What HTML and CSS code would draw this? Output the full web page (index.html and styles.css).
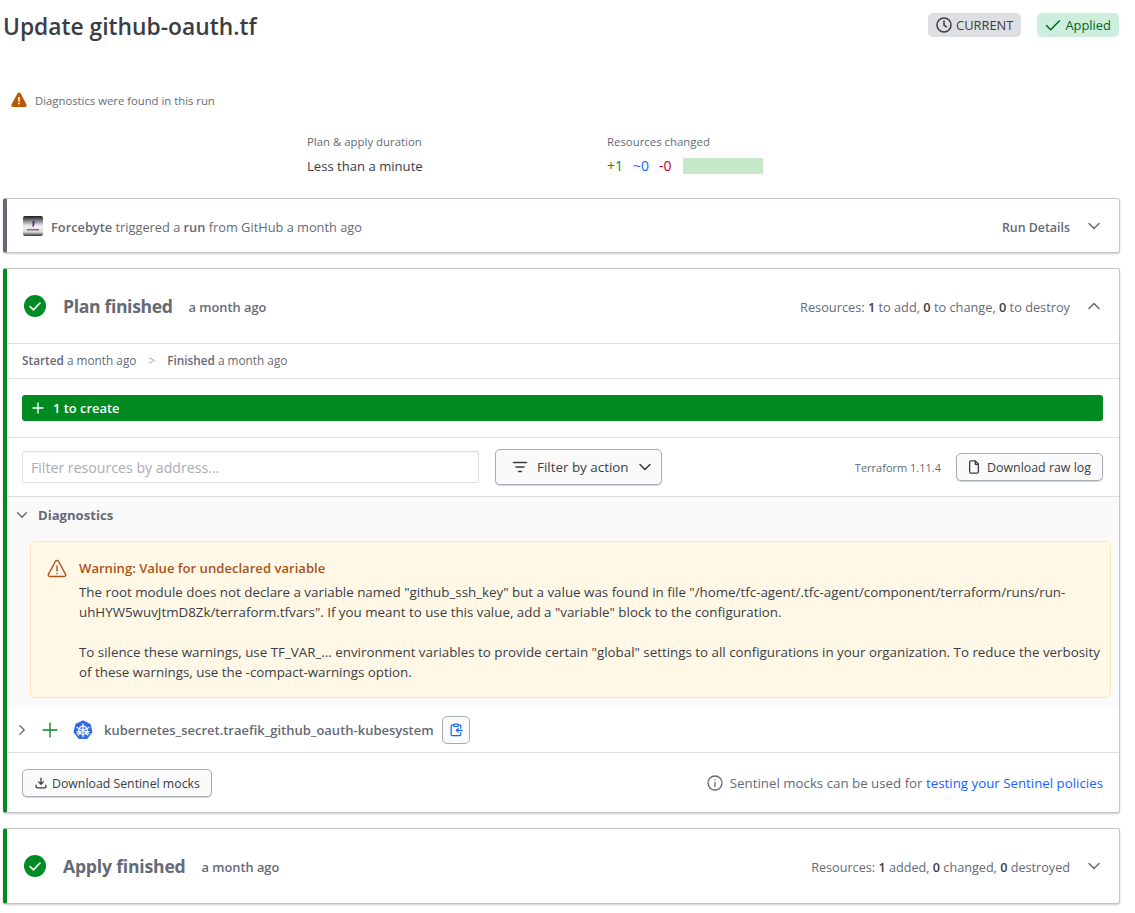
FILE: index.html
```html
<!DOCTYPE html>
<html lang="en">
<head>
<meta charset="utf-8">
<title>Update github-oauth.tf</title>
<link rel="stylesheet" href="styles.css">
</head>
<body>
<header class="top">
  <h1>Update github-oauth.tf</h1>
  <div class="badges">
    <span class="badge badge-grey"><svg class="i16" viewBox="0 0 16 16" fill="none" stroke="currentColor" stroke-width="1.5" stroke-linecap="round" stroke-linejoin="round"><circle cx="8" cy="8" r="7"/><path d="M8 4v4.2l2.4 1.6"/></svg>CURRENT</span>
    <span class="badge badge-green"><svg class="i16" viewBox="0 0 16 16" fill="none" stroke="currentColor" stroke-width="1.5" stroke-linecap="round" stroke-linejoin="round"><path d="M1.5 8.5l4.2 4.2L14.5 3.8"/></svg>Applied</span>
  </div>
</header>
<div class="notice">
  <svg class="i16 warn" viewBox="0 0 16 16"><path fill="#bb5a00" fill-rule="evenodd" d="M6.5 1.3a1.7 1.7 0 0 1 3 0l6 11.2A1.7 1.7 0 0 1 14 15H2a1.7 1.7 0 0 1-1.5-2.5zM7.2 5v4.6h1.6V5zM8 10.6a1 1 0 1 0 0 2 1 1 0 0 0 0-2z"/></svg>
  <span>Diagnostics were found in this run</span>
</div>
<section class="stats">
  <div class="stat">
    <div class="stat-label">Plan &amp; apply duration</div>
    <div class="stat-value">Less than a minute</div>
  </div>
  <div class="stat">
    <div class="stat-label">Resources changed</div>
    <div class="stat-value changes"><span class="c-add">+1</span><span class="c-chg">~0</span><span class="c-del">-0</span><span class="bar"></span></div>
  </div>
</section>

<section class="card card-grey run-card">
  <div class="run-left">
    <svg class="avatar" viewBox="0 0 20 20"><defs><linearGradient id="av" x1="0" y1="0" x2="0" y2="1"><stop offset="0" stop-color="#1c1c1c"/><stop offset=".5" stop-color="#f2f2f2"/><stop offset=".8" stop-color="#d8d8d8"/><stop offset="1" stop-color="#333"/></linearGradient></defs><rect width="20" height="20" rx="2" fill="url(#av)"/><path d="M9.5 5h2v3l-1 3h-1z" fill="#5a2a80"/><rect x="4" y="13" width="12" height="1.5" fill="#777"/></svg>
    <span class="low"><b>Forcebyte</b> triggered a <b>run</b> from GitHub a month ago</span>
  </div>
  <div class="run-right"><b class="details">Run Details</b><svg class="chev" viewBox="0 0 16 16" fill="none" stroke="currentColor" stroke-width="1.5" stroke-linecap="round" stroke-linejoin="round"><path d="M3 5.500l5 5 5-5"/></svg></div>
</section>

<section class="card card-green plan-card">
  <div class="phase-head">
    <div class="phase-left">
      <svg class="ok" viewBox="0 0 22 22"><circle cx="11" cy="11" r="11" fill="#008a22"/><path d="M6 11.5l3.4 3.4L16 8" fill="none" stroke="#fff" stroke-width="1.6" stroke-linecap="round" stroke-linejoin="round"/></svg>
      <h2 class="h2-plan">Plan finished</h2><span class="ago low">a month ago</span>
    </div>
    <div class="phase-right"><span class="low">Resources: <b>1</b> to add, <b>0</b> to change, <b>0</b> to destroy</span><svg class="chev" viewBox="0 0 16 16" fill="none" stroke="currentColor" stroke-width="1.5" stroke-linecap="round" stroke-linejoin="round"><path d="M3 10.5l5-5 5 5"/></svg></div>
  </div>
  <div class="times"><span><b>Started</b> a month ago</span><span class="sep">&gt;</span><span><b>Finished</b> a month ago</span></div>
  <div class="bar-row"><div class="create-bar"><svg class="i12" viewBox="0 0 12 12" fill="none" stroke="#fff" stroke-width="1.4" stroke-linecap="round"><path d="M6 1v10M1 6h10"/></svg><span>1 to create</span></div></div>
  <div class="filter-row">
    <div class="filter-left">
      <div class="input">Filter resources by address...</div>
      <div class="btn btn-filter"><svg class="i16" viewBox="0 0 16 16" fill="none" stroke="currentColor" stroke-width="1.5" stroke-linecap="round"><path d="M1.5 3.5h13M4 8h8M6.5 12.5h3"/></svg><span class="filter-text">Filter by action</span><svg class="i16" viewBox="0 0 16 16" fill="none" stroke="currentColor" stroke-width="1.5" stroke-linecap="round" stroke-linejoin="round"><path d="M3 5.5l5 5 5-5"/></svg></div>
    </div>
    <div class="filter-right">
      <span class="tf-ver">Terraform 1.11.4</span>
      <div class="btn btn-log"><svg class="i14" viewBox="0 0 16 16" fill="none" stroke="currentColor" stroke-width="1.5" stroke-linejoin="round"><path d="M3 2.5A1.5 1.5 0 0 1 4.500 1H9.500L13 4.500V13.500A1.500 1.500 0 0 1 11.500 15H4.500A1.500 1.500 0 0 1 3 13.500z"/><path d="M9.500 1v4H13"/></svg><span class="low-1">Download raw log</span></div>
    </div>
  </div>
  <div class="diag">
    <div class="diag-title"><svg class="i14 diag-chev" viewBox="0 0 16 16" fill="none" stroke="currentColor" stroke-width="1.6" stroke-linecap="round" stroke-linejoin="round"><path d="M3 5.500l5 5 5-5"/></svg><b>Diagnostics</b></div>
    <div class="warning">
      <svg class="warn-ico" viewBox="0 0 20 20" fill="none" stroke="#a9541b" stroke-width="1.4" stroke-linecap="round" stroke-linejoin="round"><path d="M8.400 2.500a1.800 1.800 0 0 1 3.200 0l7 12.800a1.500 1.500 0 0 1-1.300 2.200H2.700a1.500 1.500 0 0 1-1.300-2.200z"/><path d="M10 7v5M10 14.500v.3"/></svg>
      <div class="warn-body">
        <div class="warn-title">Warning: Value for undeclared variable</div>
        <p>The root module does not declare a variable named "github_ssh_key" but a value was found in file "/home/tfc-agent/.tfc-agent/component/terraform/runs/run-uhHYW5wuvJtmD8Zk/terraform.tfvars". If you meant to use this value, add a "variable" block to the configuration.</p>
        <p>To silence these warnings, use TF_VAR_... environment variables to provide certain "global" settings to all configurations in your organization. To reduce the verbosity of these warnings, use the -compact-warnings option.</p>
      </div>
    </div>
  </div>
  <div class="res-row">
    <svg class="i14 res-chev" viewBox="0 0 16 16" fill="none" stroke="currentColor" stroke-width="1.6" stroke-linecap="round" stroke-linejoin="round"><path d="M5.500 3l5 5-5 5"/></svg>
    <svg class="res-plus" viewBox="0 0 16 16" fill="none" stroke="#008a22" stroke-width="1.300" stroke-linecap="round"><path d="M8 1v14M1 8h14"/></svg>
    <svg class="k8s" viewBox="0 0 20 20"><path d="M10 .3l7.600 3.700 1.900 8.200-5.300 6.700H5.800L.5 12.200 2.400 4z" fill="#326ce5"/><g fill="none" stroke="#fff" stroke-width="1.200" stroke-linecap="round"><circle cx="10" cy="10.300" r="4.200"/><path d="M10 3.800v13M4 7.500l12 6M16 7.500l-12 6M5.200 15l2.500-2.400M14.800 15l-2.500-2.400M4 11.500h1.500M14.500 11.500H16"/></g></svg>
    <span class="res-name">kubernetes_secret.traefik_github_oauth-kubesystem</span>
    <span class="copy"><svg class="i14" viewBox="0 0 16 16" fill="none" stroke="#1563ff" stroke-width="1.400" stroke-linejoin="round" stroke-linecap="round"><path d="M5 2.500H3.500A1 1 0 0 0 2.500 3.500v10a1 1 0 0 0 1 1h9a1 1 0 0 0 1-1V11M13.500 6V3.500a1 1 0 0 0-1-1H11"/><rect x="5.500" y="1.200" width="5" height="2.800" rx=".6"/><path d="M15 8.500H8.500M10.500 6.500l-2 2 2 2"/></svg></span>
  </div>
  <div class="foot">
    <div class="btn btn-mock"><svg class="i12" viewBox="0 0 16 16" fill="none" stroke="currentColor" stroke-width="1.700" stroke-linecap="round" stroke-linejoin="round"><path d="M8 1.500v8M4.800 6.500L8 9.700l3.200-3.200M1.500 11v2a1.500 1.500 0 0 0 1.500 1.500h10a1.500 1.500 0 0 0 1.500-1.500v-2"/></svg><span class="low">Download Sentinel mocks</span></div>
    <div class="foot-note"><svg class="i16" viewBox="0 0 16 16" fill="none" stroke="currentColor" stroke-width="1.300" stroke-linecap="round"><circle cx="8" cy="8" r="7"/><path d="M8 7.500v4M8 4.800v.2"/></svg><span>Sentinel mocks can be used for <a href="#">testing your Sentinel policies</a></span></div>
  </div>
</section>

<section class="card card-green apply-card">
  <div class="phase-left">
    <svg class="ok" viewBox="0 0 22 22"><circle cx="11" cy="11" r="11" fill="#008a22"/><path d="M6 11.500l3.400 3.400L16 8" fill="none" stroke="#fff" stroke-width="1.600" stroke-linecap="round" stroke-linejoin="round"/></svg>
    <h2>Apply finished</h2><span class="ago low">a month ago</span>
  </div>
  <div class="phase-right phase-right-apply"><span class="low">Resources: <b>1</b> added, <b>0</b> changed, <b>0</b> destroyed</span><svg class="chev" viewBox="0 0 16 16" fill="none" stroke="currentColor" stroke-width="1.500" stroke-linecap="round" stroke-linejoin="round"><path d="M3 5.500l5 5 5-5"/></svg></div>
</section>
</body>
</html>
```
FILE: styles.css
```css
* { box-sizing: border-box; }
html, body { margin: 0; padding: 0; }
body {
  background: #fff;
  color: #3b3d45;
  font-family: "Open Sans", "Noto Sans", sans-serif;
  font-size: 12.8px;
  line-height: 20px;
  padding: 0 15px 0 3px;
  height: 913px;
  overflow: hidden;
}
b { font-weight: 600; }
svg { display: block; flex: none; }
.i12 { width: 12px; height: 12px; }
.i14 { width: 14px; height: 14px; }
.i16 { width: 16px; height: 16px; }
.low { padding-top: 2px; }
.low-1 { padding-top: 1px; }

.top { display: flex; justify-content: space-between; height: 54px; padding-top: 13px; }
h1 { margin: 0; font-size: 22.8px; line-height: 28px; font-weight: 600; color: #3b3d45; }
.badges { display: flex; gap: 16px; align-items: flex-start; margin-right: 1px; }
.badge { display: flex; align-items: center; gap: 4px; height: 24px; border-radius: 5px; padding: 0 8px; font-size: 12.9px; }
.badge-grey { background: #dedfe3; color: #3b3d45; }
.badge-green { background: #cdeedd; color: #00661d; }

.notice { display: flex; align-items: center; gap: 8px; margin-top: 36px; padding-left: 8px; height: 20px; font-size: 11.3px; color: #656a76; }
.notice span { padding-top: 1px; }
.stats { display: grid; grid-template-columns: 300px 300px; padding-left: 304px; margin-top: 22px; height: 66px; }
.stat-label { font-size: 11.4px; color: #656a76; line-height: 20px; }
.stat-value { font-size: 13.1px; color: #3b3d45; margin-top: 4px; line-height: 20px; }
.changes { display: flex; align-items: center; gap: 10px; font-size: 14px; }
.c-add { color: #008a22; }
.c-chg { color: #1563ff; }
.c-del { color: #c00030; }
.bar { width: 80px; height: 16px; background: #c6e9c9; margin-left: 1px; }

.card { background: #fff; border: 1px solid #c2c5cb; border-left-width: 4px; border-radius: 3px; box-shadow: 0 1px 2px rgba(101,106,118,.35); color: #656a76; }
.card-grey { border-left-color: #656a76; }
.card-green { border-left-color: #008a22; }

.run-card { display: flex; justify-content: space-between; align-items: center; height: 55px; padding: 0 17px 0 16px; }
.run-left { display: flex; align-items: center; gap: 8px; }
.avatar { width: 20px; height: 20px; }
.run-right, .phase-right { display: flex; align-items: center; gap: 16px; }
.chev { width: 16px; height: 16px; }
.details { font-weight: 600; font-size: 12.4px; padding-top: 4px; }

.plan-card { margin-top: 15px; height: 545px; display: flex; flex-direction: column; }
.phase-head { display: flex; justify-content: space-between; align-items: center; height: 75px; padding: 0 17px; border-bottom: 1px solid #dcdde1; }
.phase-left { display: flex; align-items: center; }
.ok { width: 22px; height: 22px; margin-right: 17px; }
h2 { margin: 0 16px 0 0; font-size: 17.6px; line-height: 24px; font-weight: 700; letter-spacing: -.2px; color: #656a76; }
.h2-plan { letter-spacing: -.35px; }
.ago { font-weight: 600; font-size: 12.8px; }
.phase-right { font-size: 12.75px; }
.phase-right-apply { font-size: 12.65px; }
.phase-right b { color: #3b3d45; }

.times { display: flex; gap: 12px; align-items: center; height: 35px; padding: 0 0 2px 15px; border-bottom: 1px solid #dcdde1; font-size: 11.8px; font-weight: 500; }
.times b { color: #656a76; }
.sep { color: #a9adb5; }

.bar-row { height: 59px; padding: 16px 16px 0 15px; border-bottom: 1px solid #dcdde1; }
.create-bar { display: flex; align-items: center; gap: 9px; height: 26px; border-radius: 3px; background: #008a22; color: #fff; font-weight: 600; padding-left: 10px; font-size: 12.9px; }

.filter-row { display: flex; justify-content: space-between; align-items: center; height: 59px; padding: 0 16px 0 15px; border-bottom: 1px solid #dcdde1; }
.filter-left { display: flex; gap: 16px; align-items: center; }
.input { width: 457px; height: 32px; border: 1px solid #dcdde1; border-radius: 2px; padding: 6px 8px; color: #a9adb5; font-size: 14.15px; box-shadow: inset 0 1px 1px rgba(0,0,0,.04); }
.btn { display: flex; align-items: center; border: 1px solid #a9adb5; border-radius: 5px; background: #fafafa; color: #3b3d45; box-shadow: 0 1px 1px rgba(101,106,118,.3); }
.btn-filter { width: 167px; height: 36px; padding-left: 16px; gap: 9px; font-size: 13.4px; }
.filter-text { margin-right: -1px; }
.filter-right { display: flex; align-items: center; gap: 15px; }
.tf-ver { font-size: 11px; color: #656a76; padding-top: 1px; }
.btn-log { width: 147px; height: 28px; padding-left: 10px; gap: 6px; font-size: 12.4px; }

.diag { background: #fafafa; height: 210px; padding: 0 8px 0 23px; }
.diag-title { display: flex; align-items: center; height: 37px; gap: 9px; margin-left: -15px; color: #656a76; padding-bottom: 1px; font-size: 13.1px; }
.diag-title b { font-weight: 700; }
.warning { display: flex; margin-top: 7px; height: 157px; border: 1px solid #fbe6bd; border-radius: 5px; background: #fff8e6; padding: 16px 8px 0 16px; gap: 12px; }
.warn-ico { width: 20px; height: 20px; margin-top: 1px; }
.warn-body { color: #3b3d45; font-size: 13.35px; }
.warn-title { color: #a9541b; font-weight: 600; font-size: 13.1px; margin-bottom: 4px; }
.warn-body p { margin: 0 0 20px; }

.res-row { display: flex; align-items: center; height: 46px; padding-left: 8px; border-bottom: 1px solid #dcdde1; }
.res-chev { margin-right: 13px; }
.res-plus { width: 16px; height: 16px; margin-right: 15px; }
.k8s { width: 20px; height: 20px; margin-right: 11px; }
.res-name { font-weight: 600; color: #656a76; font-size: 13px; }
.copy { display: flex; align-items: center; justify-content: center; width: 28px; height: 28px; margin-left: 8px; border: 1px solid #a9adb5; border-radius: 5px; background: #fafafa; }

.foot { display: flex; justify-content: space-between; align-items: center; flex: 1; padding: 0 16px 0 15px; }
.btn-mock { width: 190px; height: 28px; padding-left: 12px; gap: 5px; font-size: 12.3px; }
.foot-note { display: flex; align-items: center; gap: 7px; font-size: 13.3px; }
.foot-note a { color: #1563ff; text-decoration: none; }

.apply-card { display: flex; justify-content: space-between; align-items: center; height: 76px; margin-top: 15px; padding: 0 17px; }
```
